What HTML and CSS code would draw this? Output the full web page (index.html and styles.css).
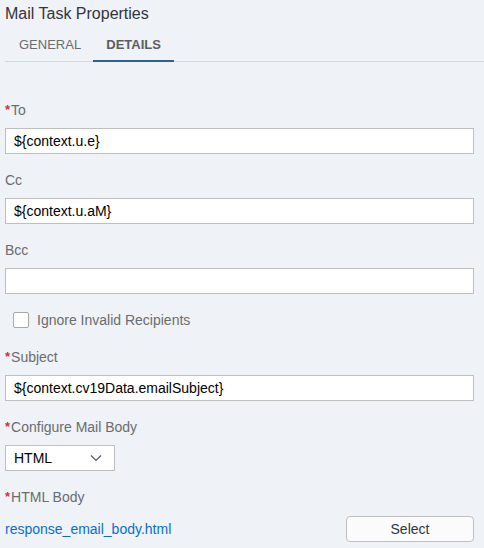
FILE: index.html
```html
<!DOCTYPE html>
<html>
<head>
<meta charset="utf-8">
<link rel="stylesheet" href="styles.css">
</head>
<body>
<div class="panel">
  <div class="title">Mail Task Properties</div>
  <div class="tabs">
    <div class="tab">GENERAL</div>
    <div class="tab active">DETAILS</div>
  </div>
  <div class="form">
    <div class="field">
      <div class="label"><span class="req">*</span>To</div>
      <div class="input">${context.u.e}</div>
    </div>
    <div class="field">
      <div class="label">Cc</div>
      <div class="input">${context.u.aM}</div>
    </div>
    <div class="field">
      <div class="label">Bcc</div>
      <div class="input"></div>
    </div>
    <div class="check-row">
      <span class="checkbox"></span>
      <span class="check-label">Ignore Invalid Recipients</span>
    </div>
    <div class="field subject">
      <div class="label"><span class="req">*</span>Subject</div>
      <div class="input">${context.cv19Data.emailSubject}</div>
    </div>
    <div class="field">
      <div class="label"><span class="req">*</span>Configure Mail Body</div>
      <div class="select">
        <span>HTML</span>
        <svg class="chev" width="12" height="8" viewBox="0 0 12 8"><path d="M1 1.5 L6 6.5 L11 1.5" fill="none" stroke="#4b5a6b" stroke-width="1.2"/></svg>
      </div>
    </div>
    <div class="field">
      <div class="label"><span class="req">*</span>HTML Body</div>
      <div class="file-row">
        <a class="link">response_email_body.html</a>
        <button class="btn">Select</button>
      </div>
    </div>
  </div>
</div>
</body>
</html>
```
FILE: styles.css
```css
html, body {
  margin: 0;
  padding: 0;
  background: #eff2f6;
}
body {
  font-family: "Liberation Sans", Arial, sans-serif;
  color: #32363a;
  width: 484px;
  height: 548px;
  overflow: hidden;
}
.panel {
  padding: 0 10px 0 5px;
}
.title {
  font-size: 16px;
  line-height: 18px;
  padding-top: 5px;
  height: 23px;
  color: #32363a;
}
.tabs {
  display: flex;
  height: 33px;
  border-bottom: 1px solid #d5d9de;
  margin-right: -10px;
  padding-left: 2px;
}
.tab {
  font-size: 13px;
  color: #6a6d70;
  padding: 4px 12px 0 12px;
  box-sizing: border-box;
  height: 34px;
  line-height: 26px;
}
.tab.active {
  font-weight: bold;
  color: #5b5e61;
  border-bottom: 2px solid #346187;
  width: 81px;
  text-align: center;
  padding: 4px 0 0 0;
}
.form {
  padding-top: 39px;
  display: flex;
  flex-direction: column;
}
.field {
  display: flex;
  flex-direction: column;
  gap: 9px;
  margin-bottom: 17px;
}
.label {
  font-size: 14px;
  line-height: 18px;
  color: #6a6d70;
  display: flex;
}
.req {
  color: #d0323a;
  font-weight: bold;
  font-size: 13px;
  margin-right: 1px;
}
.input {
  height: 26px;
  box-sizing: border-box;
  background: #fff;
  border: 1px solid #bfbfbf;
  font-size: 14px;
  line-height: 24px;
  padding-left: 8px;
  color: #000;
}
.check-row {
  display: flex;
  align-items: center;
  height: 16px;
  margin-top: 1px;
  margin-bottom: 20px;
  padding-left: 8px;
}
.checkbox {
  width: 16px;
  height: 16px;
  box-sizing: border-box;
  border: 1px solid #a8a8a8;
  border-radius: 2px;
  background: #fff;
}
.check-label {
  font-size: 14px;
  color: #6a6d70;
  margin-left: 8px;
}
.select {
  width: 110px;
  height: 26px;
  box-sizing: border-box;
  background: #fff;
  border: 1px solid #bfbfbf;
  display: flex;
  align-items: center;
  justify-content: space-between;
  padding: 0 12px 0 8px;
  font-size: 14px;
  color: #000;
}
.chev {
  display: block;
}
.file-row {
  display: flex;
  align-items: center;
  justify-content: space-between;
  margin-top: 1px;
}
.link {
  font-size: 14px;
  color: #0a6ed1;
}
.btn {
  width: 128px;
  height: 26px;
  box-sizing: border-box;
  background: #fbfbfb;
  border: 1px solid #bfbfbf;
  border-radius: 4px;
  font-family: "Liberation Sans", Arial, sans-serif;
  font-size: 14px;
  color: #32363a;
  padding: 0;
}
```
